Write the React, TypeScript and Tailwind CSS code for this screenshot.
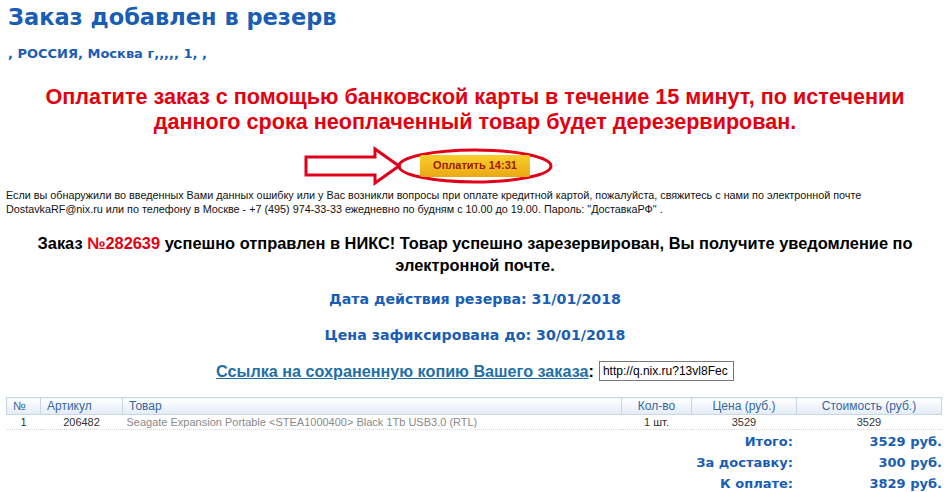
import React from "react"

const verdana = { fontFamily: '"DejaVu Sans", Verdana, sans-serif' }

function PayButton() {
  return (
    <div className="flex justify-center mt-[14px]">
      <div className="relative w-[156px] h-[36px] flex items-center justify-center">
        <svg
          className="absolute left-[-94px] top-[-2px]"
          width="100"
          height="40"
          viewBox="0 0 100 40"
        >
          <path
            d="M3 11 L72 11 L72 3 L96 20 L72 37 L72 29 L3 29 Z"
            fill="#fff"
            stroke="#e0001a"
            strokeWidth="3"
            strokeLinejoin="miter"
          />
        </svg>
        <svg className="absolute inset-0" width="156" height="36" viewBox="0 0 156 36">
          <ellipse cx="78" cy="18" rx="76" ry="16" fill="none" stroke="#e0001a" strokeWidth="3" />
        </svg>
        <button
          className="relative w-[110px] h-[22px] rounded-[2px] bg-gradient-to-b from-[#f9cf2c] to-[#eaa812] text-[11px] font-bold text-[#9b1b00]"
          style={{ fontFamily: '"Liberation Sans", Arial, sans-serif' }}
        >
          Оплатить 14:31
        </button>
      </div>
    </div>
  )
}

function OrderTable() {
  const th = "border border-[#c9d6e6] bg-gradient-to-b from-white to-[#e4ecf6] text-[#3466a3] text-[12px] font-normal h-[17px] px-[6px]"
  const td = "h-[15px] px-[6px] border-b border-dotted border-[#d8d8d8]"
  return (
    <table className="w-[936px] ml-[6px] mt-[14px] border-collapse text-[11px] leading-none">
      <thead>
        <tr>
          <th className={`${th} w-[34px] text-left`}>№</th>
          <th className={`${th} w-[82px] text-left`}>Артикул</th>
          <th className={`${th} text-left`}>Товар</th>
          <th className={`${th} w-[70px] text-center`}>Кол-во</th>
          <th className={`${th} w-[105px] text-center`}>Цена (руб.)</th>
          <th className={`${th} w-[145px] text-center`}>Стоимость (руб.)</th>
        </tr>
      </thead>
      <tbody>
        <tr className="text-[#333]">
          <td className={`${td} text-center`}>1</td>
          <td className={`${td} text-center`}>206482</td>
          <td className={`${td} text-[#8a8a8a] pl-[4px]`}>Seagate Expansion Portable &lt;STEA1000400&gt; Black 1Tb USB3.0 (RTL)</td>
          <td className={`${td} text-center`}>1 шт.</td>
          <td className={`${td} text-center`}>3529</td>
          <td className={`${td} text-center`}>3529</td>
        </tr>
      </tbody>
    </table>
  )
}

function Totals() {
  const rows = [
    ["Итого:", "3529 руб."],
    ["За доставку:", "300 руб."],
    ["К оплате:", "3829 руб."],
  ]
  return (
    <div className="flex flex-col mt-[1px] w-[942px] text-[13px] font-bold text-[#1a5db5]" style={verdana}>
      {rows.map(([label, value]) => (
        <div key={label} className="flex justify-end h-[21px] items-center">
          <span className="w-[200px] text-right">{label}</span>
          <span className="w-[149px] text-right">{value}</span>
        </div>
      ))}
    </div>
  )
}

export default function App() {
  return (
    <div className="w-[950px] h-[492px] bg-white overflow-hidden" style={{ fontFamily: '"Liberation Sans", Arial, sans-serif' }}>
      <h1 className="pl-[8px] pt-[4px] text-[22.5px] leading-[26px] font-bold text-[#1a5db5]" style={verdana}>
        Заказ добавлен в резерв
      </h1>
      <div className="pl-[8px] mt-[14px] text-[13px] font-bold text-[#1a5db5]" style={verdana}>
        , РОССИЯ, Москва г,,,,, 1, ,
      </div>
      <div className="mt-[20px] text-center text-[21.6px] leading-[25px] font-bold text-[#e3000f]">
        Оплатите заказ с помощью банковской карты в течение 15 минут, по истечении
        <br />
        данного срока неоплаченный товар будет дерезервирован.
      </div>
      <PayButton />
      <div className="pl-[6px] mt-[4px] text-[10.8px] leading-[14px] text-[#111]">
        Если вы обнаружили во введенных Вами данных ошибку или у Вас возникли вопросы при оплате кредитной картой, пожалуйста, свяжитесь с нами по электронной почте
        <br />
        DostavkaRF@nix.ru или по телефону в Москве - +7 (495) 974-33-33 ежедневно по будням с 10.00 до 19.00. Пароль: "ДоставкаРФ" .
      </div>
      <div className="mt-[16px] text-center text-[16.4px] leading-[22px] font-bold text-black">
        Заказ <span className="text-[#e3000f]">№282639</span> успешно отправлен в НИКС! Товар успешно зарезервирован, Вы получите уведомление по
        <br />
        электронной почте.
      </div>
      <div className="mt-[13px] text-center text-[14.2px] font-bold text-[#1a5db5]" style={verdana}>
        Дата действия резерва: 31/01/2018
      </div>
      <div className="mt-[15px] text-center text-[14.2px] font-bold text-[#1a5db5]" style={verdana}>
        Цена зафиксирована до: 30/01/2018
      </div>
      <div className="mt-[13px] flex justify-center items-center text-[16.2px] font-bold">
        <a className="underline text-[#1f6fa6]">Ссылка на сохраненную копию Вашего заказа</a>
        <span className="text-black">:</span>
        <input
          readOnly
          value="http://q.nix.ru?13vl8Fec"
          className="ml-[5px] w-[135px] h-[20px] border border-[#777] px-[3px] text-[12px] font-normal text-black outline-none"
        />
      </div>
      <OrderTable />
      <Totals />
    </div>
  )
}
